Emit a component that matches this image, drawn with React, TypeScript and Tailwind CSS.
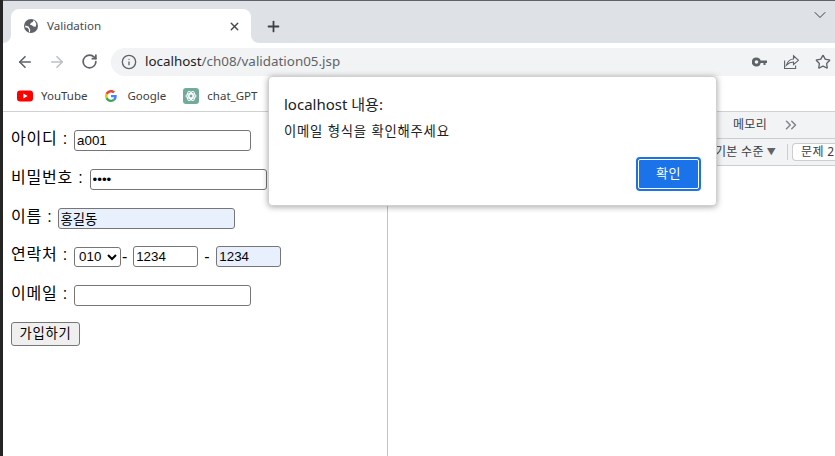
import { ArrowLeft, ArrowRight, ChevronDown, ChevronsRight, Info, Plus, RotateCw, Star, X } from 'lucide-react'
import type { ReactNode } from 'react'

const KR = "font-['Liberation_Sans','Noto_Sans_CJK_KR',sans-serif]"
const UI = "font-['Noto_Sans','Noto_Sans_CJK_KR',sans-serif]"

function Field({ className = '', value, type = 'text' }: { className?: string; value?: string; type?: string }) {
  return (
    <input
      readOnly
      type={type}
      value={value ?? ''}
      className={`box-border h-[21px] rounded-[3px] border border-[#767676] px-[2px] text-[13.33px] tracking-normal text-black outline-none ${className}`}
    />
  )
}

function Row({ label, children }: { label: string; children: ReactNode }) {
  return (
    <div className="flex h-[21px] items-center">
      <span className="mb-[3px]">{label}</span>
      {children}
    </div>
  )
}

function GlobeIcon() {
  return (
    <svg width="14" height="14" viewBox="0 0 14 14" className="shrink-0">
      <circle cx="7" cy="7" r="7" fill="#5f6368" />
      <path d="M9.500 1.200 8.800 3 6.800 4 6 5.800l2 .5 1.400 1.200 2.300.2.600-2.600-1.400-3zM1 8.200l2.500.6 1.300 1.700.2 2.500.8.500.5-2.700L4.500 7.500 1.500 6.500z" fill="#fff" />
    </svg>
  )
}

function KeyIcon() {
  return (
    <svg width="15" height="10" viewBox="0 0 15 10" className="mr-[17px] shrink-0" fill="#5f6368">
      <path fillRule="evenodd" d="M4.500.5a4.500 4.500 0 0 1 4.200 3H15v2.500h-1.500V8h-2V6H8.700a4.500 4.500 0 1 1-4.200-5.500zm0 2.700a1.800 1.800 0 1 0 0 3.600 1.800 1.800 0 0 0 0-3.600z" />
    </svg>
  )
}

function ShareIcon() {
  return (
    <svg width="15" height="15" viewBox="0 0 15 15" className="mr-[16px] shrink-0" fill="none" stroke="#5f6368" strokeWidth="1.100">
      <path d="M.6 6.500v8h11v-3" />
      <path d="M2.500 11C3.500 7.500 6.500 5 9.500 5V1.800L14.500 6.300 9.500 10.500V8C6.800 8 4.500 9 2.500 11z" />
    </svg>
  )
}

function YoutubeIcon() {
  return (
    <svg width="16" height="16" viewBox="0 0 16 16" className="shrink-0">
      <rect x="0" y="2.500" width="16" height="11" rx="3" fill="#f00" />
      <path d="M6.400 5.600 10.600 8l-4.200 2.400z" fill="#fff" />
    </svg>
  )
}

function GoogleIcon() {
  return (
    <svg width="12" height="12" viewBox="0 0 48 48" className="shrink-0">
      <path fill="#EA4335" d="M24 9.500c3.500 0 6.700 1.200 9.200 3.600l6.900-6.900C35.900 2.400 30.500 0 24 0 14.600 0 6.500 5.400 2.600 13.200l8 6.200C12.400 13.700 17.700 9.500 24 9.500z" />
      <path fill="#4285F4" d="M46.900 24.500c0-1.600-.1-3.100-.4-4.500H24v9h12.900c-.6 3-2.200 5.500-4.700 7.200l7.700 6c4.500-4.200 7-10.300 7-17.700z" />
      <path fill="#FBBC05" d="M10.600 28.600c-.5-1.400-.8-3-.8-4.600s.3-3.200.8-4.600l-8-6.200C.9 16.500 0 20.100 0 24s.9 7.500 2.600 10.800l8-6.200z" />
      <path fill="#34A853" d="M24 48c6.500 0 11.900-2.100 15.900-5.800l-7.700-6c-2.200 1.500-4.900 2.300-8.200 2.300-6.300 0-11.600-4.200-13.400-9.900l-8 6.200C6.500 42.600 14.600 48 24 48z" />
    </svg>
  )
}

function ChatGptIcon() {
  return (
    <span className="flex h-4 w-4 shrink-0 items-center justify-center rounded-[3px] bg-[#74aa9c]">
      <svg width="12" height="12" viewBox="0 0 12 12" fill="none" stroke="#fff" strokeWidth="1">
        <circle cx="6" cy="6" r="2" />
        <ellipse cx="6" cy="6" rx="5" ry="2.400" />
        <ellipse cx="6" cy="6" rx="5" ry="2.400" transform="rotate(60 6 6)" />
        <ellipse cx="6" cy="6" rx="5" ry="2.400" transform="rotate(120 6 6)" />
      </svg>
    </span>
  )
}

function TabStrip() {
  return (
    <div className="flex h-[43px] items-end border-t border-[#5f6368] bg-[#dee1e6]">
      <span className="h-2 w-2 bg-white">
        <span className="block h-2 w-2 rounded-br-lg bg-[#dee1e6]" />
      </span>
      <div className="flex h-[34px] w-[240px] items-center rounded-t-lg bg-white pl-[13px] pr-[10px]">
        <GlobeIcon />
        <span className={`ml-[9px] flex-1 text-[11.6px] text-[#45494d] ${UI}`}>Validation</span>
        <X size={13} strokeWidth={2.500} className="text-[#45494d]" />
      </div>
      <span className="h-2 w-2 bg-white">
        <span className="block h-2 w-2 rounded-bl-lg bg-[#dee1e6]" />
      </span>
      <Plus size={17} strokeWidth={2.500} className="mb-[8px] ml-[6px] text-[#3c4043]" />
      <ChevronDown size={20} strokeWidth={1.200} className="mb-[18px] ml-auto mr-[5px] text-[#3c4043]" />
    </div>
  )
}

function Toolbar() {
  return (
    <div className="flex h-[37px] items-center bg-white pl-[13px]">
      <ArrowLeft size={18} strokeWidth={2.200} className="text-[#5f6368]" />
      <ArrowRight size={18} strokeWidth={2.200} className="ml-[14px] text-[#bdc1c6]" />
      <RotateCw size={17} strokeWidth={2.400} className="ml-[15px] text-[#5f6368]" />
      <div className="ml-[13px] flex h-[28px] flex-1 items-center rounded-l-[14px] bg-[#f1f3f4] pl-[10px] pr-[4px]">
        <Info size={16} strokeWidth={2} className="text-[#5f6368]" />
        <span className={`ml-[8px] flex-1 text-[13.4px] text-[#5f6368] ${UI}`}>
          <span className="text-[#202124]">localhost</span>/ch08/validation05.jsp
        </span>
        <KeyIcon />
        <ShareIcon />
        <Star size={16} strokeWidth={2} className="text-[#5f6368]" />
      </div>
    </div>
  )
}

function BookmarkBar() {
  return (
    <div className={`flex h-[32px] items-center border-b border-[#d0d1d3] bg-white pl-[14px] text-[11.5px] text-[#3c4043] ${UI}`}>
      <YoutubeIcon />
      <span className="ml-[8px]">YouTube</span>
      <span className="ml-[18px]"><GoogleIcon /></span>
      <span className="ml-[10px]">Google</span>
      <span className="ml-[17px]"><ChatGptIcon /></span>
      <span className="ml-[8px]">chat_GPT</span>
    </div>
  )
}

function SignupForm() {
  return (
    <div className={`flex w-[384px] shrink-0 flex-col gap-[17.75px] pl-[8px] pt-[18px] text-base tracking-[0.8px] text-black ${KR}`}>
      <Row label="아이디 :">
        <Field className="ml-[6px] w-[177px]" value="a001" />
      </Row>
      <Row label="비밀번호 :">
        <Field className="ml-[6px] w-[177px]" value="••••" />
      </Row>
      <Row label="이름 :">
        <Field className="ml-[5px] w-[177px] bg-[#e8f0fe]" value="홍길동" />
      </Row>
      <Row label="연락처 :">
        <select className="ml-[6px] box-border h-[20px] w-[47px] rounded-[3px] border border-[#767676] bg-white text-[13.33px] tracking-normal text-black">
          <option>010</option>
        </select>
        <span className="ml-[1px]">-</span>
        <Field className="ml-[5px] w-[65px]" value="1234" />
        <span className="mx-[6px]">-</span>
        <Field className="w-[65px] bg-[#e8f0fe]" value="1234" />
      </Row>
      <Row label="이메일 :">
        <Field className="ml-[6px] w-[177px]" />
      </Row>
      <div className="-mt-[3px]">
        <button className="h-[24px] w-[69px] rounded-[3px] border border-[#767676] bg-[#efefef] text-[13.33px] text-black">
          가입하기
        </button>
      </div>
    </div>
  )
}

function DevtoolsPane() {
  return (
    <div className={`flex-1 border-l border-[#c4c4c4] bg-white text-xs tracking-[0.3px] text-[#3c4043] ${UI}`}>
      <div className="flex h-[27px] items-center border-b border-[#cbcdd1] bg-[#f1f3f4] pl-[345px]">
        <span>메모리</span>
        <ChevronsRight size={18} strokeWidth={2} className="ml-[15px] text-[#80868b]" />
      </div>
      <div className="flex h-[27px] items-center border-b border-[#cbcdd1] bg-[#f1f3f4] pl-[327px]">
        <span>기본 수준</span>
        <span className="ml-[3px] text-[9px] text-[#5f6368]">▼</span>
        <span className="ml-[11px] h-[16px] w-px bg-[#cbcdd1]" />
        <span className="ml-[4px] flex h-[18px] flex-1 items-center whitespace-nowrap rounded-l-sm border border-r-0 border-[#cbcdd1] bg-white pl-[8px]">문제 2</span>
      </div>
    </div>
  )
}

function AlertDialog() {
  return (
    <div className="absolute left-[268px] top-[76px] h-[130px] w-[449px] rounded-[4px] border border-[#d0d0d0] bg-white text-[#202124] shadow-[0_1px_6px_rgba(0,0,0,0.35)]">
      <div className="flex h-full flex-col px-[15px] pt-[15px]">
        <p className={`text-[15px] leading-[24px] ${UI}`}>localhost 내용:</p>
        <p className={`mt-[7px] text-[13.33px] leading-[18px] tracking-[0.8px] ${KR}`}>이메일 형식을 확인해주세요</p>
        <div className="mb-[14px] mt-auto flex justify-end">
          <button className={`box-border h-[34px] w-[65px] rounded-[4px] border-2 border-[#1a73e8] bg-[#1a73e8] text-[13px] tracking-[0.5px] text-white outline outline-1 -outline-offset-3 outline-white ${KR}`}>
            확인
          </button>
        </div>
      </div>
    </div>
  )
}

export default function App() {
  return (
    <div className="relative flex h-[456px] w-[835px] overflow-hidden bg-white">
      <div className="w-[3px] shrink-0 bg-[#252525]" />
      <div className="flex min-w-0 flex-1 flex-col">
        <TabStrip />
        <Toolbar />
        <BookmarkBar />
        <div className="flex flex-1">
          <SignupForm />
          <DevtoolsPane />
        </div>
      </div>
      <AlertDialog />
    </div>
  )
}
